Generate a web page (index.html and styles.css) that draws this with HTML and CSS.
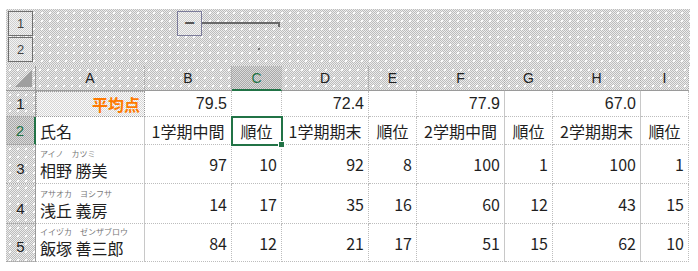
FILE: index.html
```html
<!DOCTYPE html>
<html>
<head>
    <meta charset="utf-8">
    <link rel="stylesheet" href="styles.css">
</head>
<body>
    <div class="sheet">
        <div class="outline dither">
            <div class="levels">
                <div class="level-btn">1</div>
                <div class="level-btn">2</div>
            </div>
            <div class="group">
                <div class="level-btn minus">&minus;</div>
                <div class="bracket"></div>
            </div>
            <div class="dot"></div>
        </div>

        <div class="grid">
            <!-- column headers -->
            <div class="corner dither"><span class="tri"></span></div>
            <div class="ch dither">A</div>
            <div class="ch dither">B</div>
            <div class="ch ch-sel">C</div>
            <div class="ch dither">D</div>
            <div class="ch dither">E</div>
            <div class="ch dither">F</div>
            <div class="ch dither">G</div>
            <div class="ch dither">H</div>
            <div class="ch dither">I</div>

            <!-- row 1 -->
            <div class="rh dither">1</div>
            <div class="c num avg light-dither">平均点</div>
            <div class="c num latin">79.5</div>
            <div class="c"></div>
            <div class="c num latin">72.4</div>
            <div class="c"></div>
            <div class="c num latin solid">77.9</div>
            <div class="c"></div>
            <div class="c num latin solid">67.0</div>
            <div class="c"></div>

            <!-- row 2 -->
            <div class="rh rh-sel">2</div>
            <div class="c solid">氏名</div>
            <div class="c ctr">1学期中間</div>
            <div class="c ctr sel">順位</div>
            <div class="c ctr">1学期期末</div>
            <div class="c ctr">順位</div>
            <div class="c ctr solid">2学期中間</div>
            <div class="c ctr">順位</div>
            <div class="c ctr solid">2学期期末</div>
            <div class="c ctr">順位</div>

            <!-- row 3 -->
            <div class="rh rh-low dither">3</div>
            <div class="c name solid"><span class="kana">アイノ　カツミ</span><span>相野 勝美</span></div>
            <div class="c num">97</div>
            <div class="c num">10</div>
            <div class="c num">92</div>
            <div class="c num">8</div>
            <div class="c num solid">100</div>
            <div class="c num">1</div>
            <div class="c num solid">100</div>
            <div class="c num">1</div>

            <!-- row 4 -->
            <div class="rh rh-low dither">4</div>
            <div class="c name solid"><span class="kana">アサオカ　ヨシフサ</span><span>浅丘 義房</span></div>
            <div class="c num">14</div>
            <div class="c num">17</div>
            <div class="c num">35</div>
            <div class="c num">16</div>
            <div class="c num solid">60</div>
            <div class="c num">12</div>
            <div class="c num solid">43</div>
            <div class="c num">15</div>

            <!-- row 5 -->
            <div class="rh rh-low dither">5</div>
            <div class="c name solid"><span class="kana">イイヅカ　ゼンザブロウ</span><span>飯塚 善三郎</span></div>
            <div class="c num">84</div>
            <div class="c num">12</div>
            <div class="c num">21</div>
            <div class="c num">17</div>
            <div class="c num solid">51</div>
            <div class="c num">15</div>
            <div class="c num solid">62</div>
            <div class="c num">10</div>
        </div>
    </div>
</body>
</html>
```

FILE: styles.css
```css
body {
    margin: 0;
    background: #fff;
    font-family: "Noto Sans CJK JP", "Noto Sans", sans-serif;
    color: #1f1f1f;
}

.sheet {
    margin: 9px 0 0 6px;
    width: 684px;
}

/* dithered grey like the saved screenshot, with a sparse white dot grid */
.dither {
    background:
        radial-gradient(circle, #fff 0.7px, transparent 0.8px) 0 0 / 8px 8px,
        repeating-conic-gradient(#bcbcbc 0 25%, #ededed 0 50%) 0 0 / 2px 2px;
}

.light-dither {
    background: repeating-conic-gradient(#d6d6d6 0 25%, #fafafa 0 50%) 0 0 / 2px 2px;
}

/* outline (grouping) area */
.outline {
    position: relative;
    height: 57px;
    display: flex;
    align-items: flex-start;
}

.levels {
    display: flex;
    flex-direction: column;
    margin: 2px 0 0 2px;
}

.level-btn {
    width: 25px;
    height: 25px;
    box-sizing: border-box;
    border: 1px solid #6f6f6f;
    display: flex;
    align-items: center;
    justify-content: center;
    font-family: "Liberation Sans", sans-serif;
    font-size: 13px;
    color: #444;
    background: repeating-conic-gradient(#cfcfcf 0 25%, #f3f3f3 0 50%) 0 0 / 2px 2px;
}

.level-btn + .level-btn {
    margin-top: 1px;
}

.group {
    display: flex;
    align-items: flex-start;
    margin: 2px 0 0 144px;
}

.minus {
    font-size: 18px;
    font-weight: bold;
    color: #555;
    border-color: #7c7c9a;
}

.bracket {
    width: 76px;
    height: 3px;
    margin-top: 11px;
    border-top: 2px solid #6a6a6a;
    border-right: 2px solid #6a6a6a;
}

.dot {
    position: absolute;
    left: 252px;
    top: 39px;
    width: 2px;
    height: 2px;
    background: #777;
}

/* sheet grid */
.grid {
    display: grid;
    grid-template-columns: 30px 109px 87px 50px 87px 48px 88px 48px 88px 48px;
    grid-template-rows: 25px 26px 28px 39px 40px 38px;
}

.corner {
    position: relative;
    border-right: 1px solid #9a9a9a;
    border-bottom: 1px solid #9a9a9a;
}

.tri {
    position: absolute;
    right: 3px;
    bottom: 3px;
    width: 0;
    height: 0;
    border-left: 17px solid transparent;
    border-bottom: 17px solid #9f9f9f;
}

.ch {
    display: flex;
    align-items: center;
    justify-content: center;
    font-family: "Liberation Sans", sans-serif;
    font-size: 14px;
    color: #222;
    border-right: 1px dotted #a8a8a8;
    border-bottom: 1px solid #9a9a9a;
}

.ch-sel {
    background: repeating-conic-gradient(#a9a9a9 0 25%, #dadada 0 50%) 0 0 / 2px 2px;
    color: #217346;
    border-bottom: 2px solid #217346;
}

.rh {
    display: flex;
    align-items: center;
    justify-content: center;
    font-family: "Liberation Sans", sans-serif;
    font-size: 15px;
    color: #222;
    border-right: 1px solid #9a9a9a;
    border-bottom: 1px dotted #a8a8a8;
}

.rh-low {
    align-items: flex-end;
    padding-bottom: 6px;
}

.rh-sel {
    background: repeating-conic-gradient(#a9a9a9 0 25%, #dadada 0 50%) 0 0 / 2px 2px;
    color: #217346;
    border-right: 2px solid #217346;
}

.c {
    display: flex;
    align-items: center;
    padding: 0 4px;
    font-size: 16px;
    line-height: 1;
    white-space: nowrap;
    border-right: 1px dotted #bdbdbd;
    border-bottom: 1px dotted #bdbdbd;
}

.c.solid {
    border-right: 1px solid #c8c8c8;
}

.num {
    justify-content: flex-end;
}

.ctr {
    justify-content: center;
    padding: 0;
}

.latin {
    font-family: "Liberation Sans", sans-serif;
}

.avg {
    color: #ff7a00;
    font-weight: bold;
    border: 1px dotted #9a9a9a;
}

.name {
    flex-direction: column;
    align-items: flex-start;
    justify-content: flex-end;
    padding-bottom: 5px;
}

.kana {
    font-size: 8px;
    color: #777;
    margin-bottom: 4px;
}

.sel {
    position: relative;
}

.sel::after {
    content: "";
    position: absolute;
    left: -1px;
    top: -1px;
    right: -2px;
    bottom: -2px;
    border: 2px solid #217346;
}

.sel::before {
    content: "";
    position: absolute;
    right: -4px;
    bottom: -4px;
    width: 5px;
    height: 5px;
    background: #217346;
    border: 1px solid #fff;
    z-index: 1;
}
```
